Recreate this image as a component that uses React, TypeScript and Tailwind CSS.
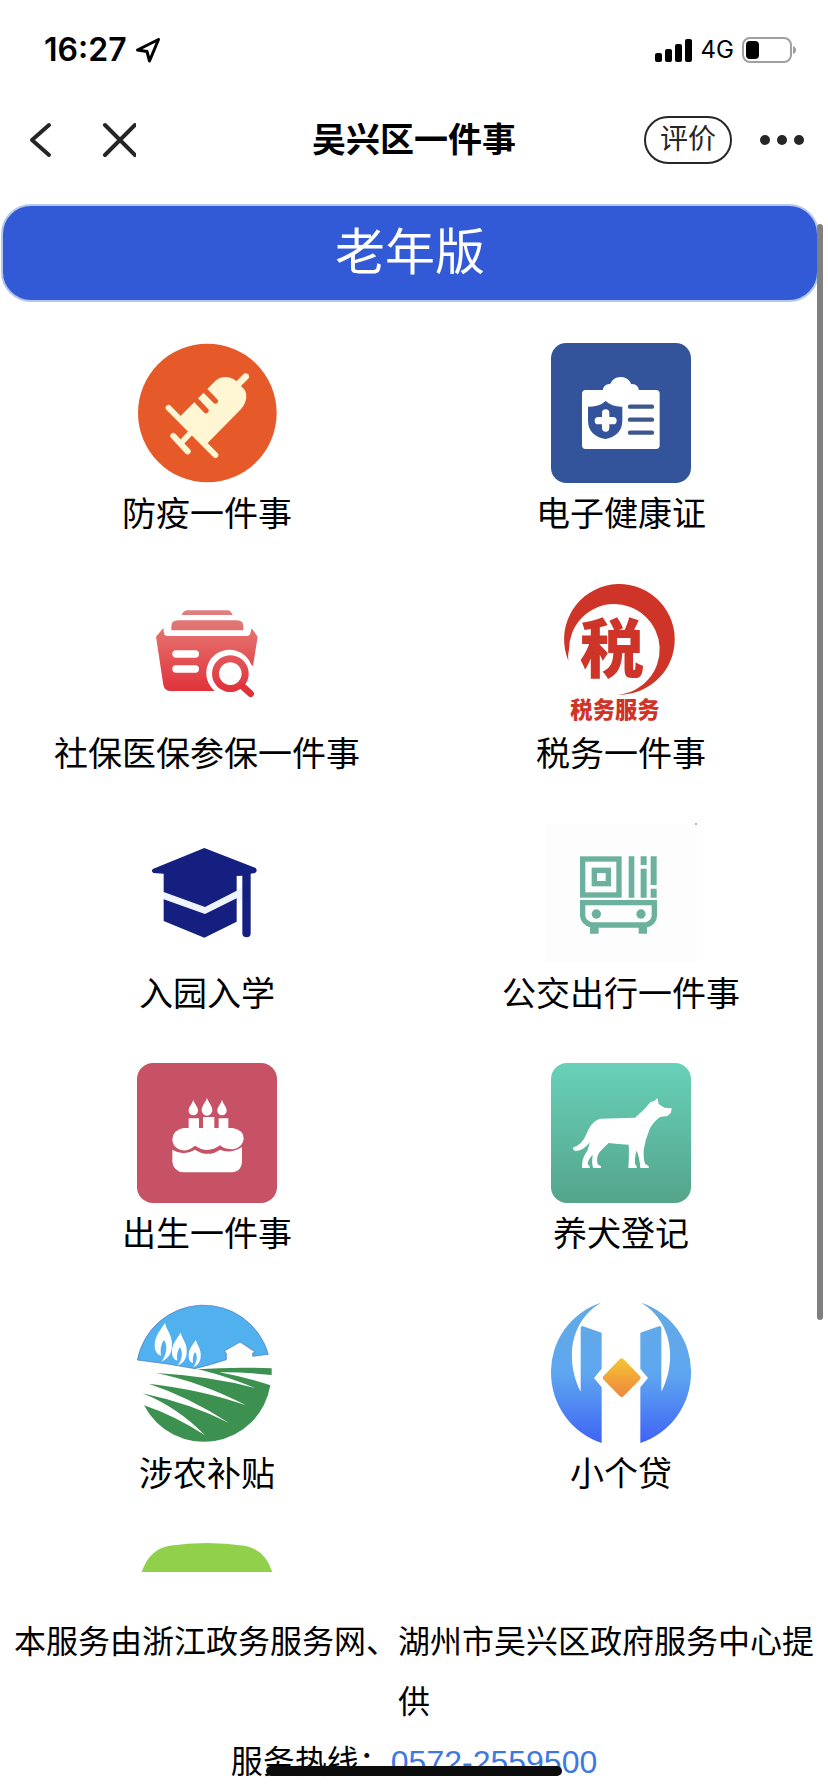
import type { ReactNode } from "react";

type Service = {
  label: string;
  icon: ReactNode;
};

function VaccineIcon() {
  return (
    <svg viewBox="81 69 420 420" className="size-full" aria-hidden="true">
      <circle cx="292" cy="279" r="208" fill="#e65a2a" />
      <g stroke="#fff6d3" strokeLinecap="round" fill="none">
        <path d="M176 264 316 405" strokeWidth="18" />
        <path d="m190 348 43 46" strokeWidth="18" />
        <path d="m212 370 30-32" strokeWidth="17" />
        <path d="m385 192 22-22" strokeWidth="20" />
      </g>
      <path
        d="M208 292 312 187Q325 171 348 171Q362 171 378 182L398 203Q410 213 409 232Q407 252 394 266L288 374Z"
        fill="#fff6d3"
      />
      <path
        d="m256 238 32 34m-6-64 34 35"
        stroke="#e65a2a"
        strokeWidth="16"
        strokeLinecap="round"
      />
    </svg>
  );
}

function HealthCardIcon() {
  return (
    <svg viewBox="93 69 420 420" className="size-full" aria-hidden="true">
      <rect x="93" y="69" width="420" height="420" rx="46" fill="#33539b" />
      <g fill="#fff">
        <rect x="186" y="210" width="233" height="177" rx="11" />
        <circle cx="302" cy="205" r="34" />
        <circle cx="268" cy="212" r="20" />
        <circle cx="337" cy="212" r="20" />
      </g>
      <path
        d="M204 260Q236 262 257 243Q276 261 307 260V302C307 335 285 351 256 357C226 351 204 335 204 302Z"
        fill="#33539b"
      />
      <path
        d="M257 279v45m-22-22h44"
        stroke="#fff"
        strokeWidth="22"
        strokeLinecap="round"
      />
      <path
        d="M330 260h66m-66 39h66m-66 39h66"
        stroke="#3e578e"
        strokeWidth="13"
        strokeLinecap="round"
      />
    </svg>
  );
}

function InsuranceIcon() {
  return (
    <svg viewBox="81 39 420 420" className="size-full" aria-hidden="true">
      <defs>
        <linearGradient
          id="insurance"
          x1="0"
          y1="120"
          x2="0"
          y2="380"
          gradientUnits="userSpaceOnUse"
        >
          <stop offset="0" stopColor="#df8081" />
          <stop offset="0.3" stopColor="#e56b69" />
          <stop offset="1" stopColor="#e02c36" />
        </linearGradient>
      </defs>
      <g fill="url(#insurance)">
        <path d="M215 135Q220 121 232 121H352Q363 121 368 135Z" />
        <path d="M184 181V170Q184 151 204 151H381Q400 151 400 170V181Z" />
        <path d="M160 174 138 200 160 345Q164 363 182 363H314A70 70 0 1 1 424 284L429 288 443 200 425 175 421 190Q419 198 410 198H173Q163 198 162 190Z" />
        <path
          fillRule="evenodd"
          d="M361 256a55 55 0 1 0 .1 0ZM361 277a34 34 0 1 1-.1 0Z"
        />
      </g>
      <path
        d="m399 350 23 21"
        stroke="#e03039"
        strokeWidth="20"
        strokeLinecap="round"
      />
      <rect x="187" y="241" width="80" height="22" rx="11" fill="#fff" />
      <rect x="187" y="286" width="80" height="22" rx="11" fill="#fff" />
    </svg>
  );
}

function TaxIcon() {
  return (
    <svg
      viewBox="93 39 420 420"
      className="size-full overflow-visible font-['Noto_Sans_CJK_SC',sans-serif] font-black"
      fill="#cf3428"
      aria-hidden="true"
    >
      <path d="M145 272A166 166 0 1 1 292 374A136 136 0 1 0 147 240Q142 256 145 272Z" />
      <text x="180" y="307" fontSize="192">
        税
      </text>
      <text x="151" y="445" fontSize="67">
        税务服务
      </text>
    </svg>
  );
}

function SchoolIcon() {
  return (
    <svg viewBox="81 39 420 420" className="size-full" aria-hidden="true">
      <path d="M161 240 285 290 397 230V270L285 320 161 275Z" fill="#eef5ff" />
      <g fill="#141f7f">
        <path d="M283 114 437 174Q444 183 435 189L422 191V370Q422 382 410 382Q397 382 397 370V197L380 198V242L285 291 161 246V191L130 189Q121 182 130 176Z" />
        <path d="M161 268 285 312 380 265V335L283 383 161 333Z" />
      </g>
    </svg>
  );
}

function BusIcon() {
  return (
    <svg
      viewBox="93 39 420 420"
      className="size-full overflow-visible"
      aria-hidden="true"
    >
      <rect x="75" y="42" width="456" height="417" fill="#fdfdfd" />
      <circle cx="528" cy="42" r="3" fill="#9aa5a3" />
      <g fill="none" stroke="#6bb19d" strokeWidth="16">
        <rect x="188" y="147" width="109" height="108" />
        <rect x="223" y="181" width="42" height="40" />
        <path d="M188 278H403V318Q402 338 378 345H214Q190 338 188 318Z" />
      </g>
      <g fill="#6bb19d">
        <path d="M326 139h17v124h-17zM362 139h18v26h-18zM362 176h18v87h-18zM392 139h18v86h-18zM392 236h18v27h-18z" />
        <path d="M210 348h26v23h-26zM356 348h25v23h-25z" />
        <circle cx="229" cy="312" r="14" />
        <circle cx="363" cy="312" r="14" />
      </g>
    </svg>
  );
}

function BirthIcon() {
  return (
    <svg viewBox="81 39 420 420" className="size-full" aria-hidden="true">
      <rect x="81" y="39" width="420" height="420" rx="48" fill="#c75265" />
      <g fill="#fff">
        <path d="M250 150C246 163 236 170 236 182A14 14 0 0 0 264 182C264 170 254 163 250 150Z" />
        <path d="M291 144C286 159 275 167 275 181A16 16 0 0 0 307 181C307 167 296 159 291 144Z" />
        <path d="M336 150C332 163 322 170 322 182A14 14 0 0 0 350 182C350 170 340 163 336 150Z" />
        <path d="M236 205h31v34h-31zM279 201h34v38h-34zM326 205h29v34h-29z" />
        <path d="M220 234H368Q401 240 401 266Q399 290 372 297Q347 300 330 286Q293 313 255 287Q229 309 205 297Q187 288 187 268Q189 240 220 234Z" />
        <path d="M187 299Q221 320 255 299Q294 324 330 299Q361 313 396 291V335Q394 367 360 367H222Q190 365 187 335Z" />
      </g>
    </svg>
  );
}

function DogIcon() {
  return (
    <svg viewBox="93 39 420 420" className="size-full" aria-hidden="true">
      <defs>
        <linearGradient id="dog" x1="0" y1="0" x2="0" y2="1">
          <stop offset="0" stopColor="#68d1b9" />
          <stop offset="1" stopColor="#54a48b" />
        </linearGradient>
      </defs>
      <rect x="93" y="39" width="420" height="420" rx="48" fill="url(#dog)" />
      <path
        d="M412 144 416 162 433 173 455 175 453 188 442 198 420 201Q396 219 388 240Q375 270 371 300Q370 328 375 341L386 348V354H361Q359 322 350 302Q344 318 345 342L350 348V354H325Q328 310 326 284Q295 282 266 279Q251 293 237 308Q228 325 233 343L243 349V354H219Q214 335 218 314Q204 328 203 343L209 348V354H186Q184 325 202 302L210 276Q190 303 166 303Q157 300 160 292Q186 284 198 255Q213 213 240 206L345 203Q370 183 392 156L403 153Z"
        fill="#fff"
      />
    </svg>
  );
}

function FarmIcon() {
  const leaf =
    "M165 98C152 120 134 138 134 166C134 185 143 195 153 197C150 180 153 162 162 150C174 166 170 195 154 215C176 206 187 190 186 160C185 132 169 120 165 98Z";

  return (
    <svg viewBox="81 39 420 420" className="size-full" aria-hidden="true">
      <path
        d="M82 210A202 202 0 0 1 475 193L428 199V189L436 186 390 156 343 183 349 190V209Q300 225 255 236Q170 220 82 210Z"
        fill="#51b1ef"
        stroke="#4a72b8"
        strokeWidth="2"
      />
      <g fill="#fff">
        <path d={leaf} />
        <path d={leaf} transform="translate(72 44) scale(.85)" />
        <path d={leaf} transform="translate(142 81) scale(.7)" />
      </g>
      <path
        d="M262 238Q370 230 485 235V255Q400 246 328 247Q410 262 481 286A202 202 0 0 1 102 346Q190 375 285 436Q200 350 97 310Q240 340 357 399Q240 322 116 281Q280 300 408 346Q270 275 138 249Q300 258 435 294Q330 252 262 238Z"
        fill="#3d9150"
      />
    </svg>
  );
}

function LoanIcon() {
  const wing =
    "M243 38A218 218 0 0 0 93 249A222 222 0 0 0 245 459V292L222 264 245 236V128L187 108 182 112V305C140 225 140 100 243 38Z";

  return (
    <svg viewBox="93 39 420 420" className="size-full" aria-hidden="true">
      <defs>
        <linearGradient
          id="wing"
          x1="0"
          y1="39"
          x2="0"
          y2="459"
          gradientUnits="userSpaceOnUse"
        >
          <stop offset="0.1" stopColor="#62a9e6" />
          <stop offset="0.5" stopColor="#5ea7f0" />
          <stop offset="1" stopColor="#4063f5" />
        </linearGradient>
        <linearGradient id="coin" x1="0" y1="0" x2="0" y2="1">
          <stop offset="0" stopColor="#f3c534" />
          <stop offset="1" stopColor="#f0853d" />
        </linearGradient>
      </defs>
      <g fill="url(#wing)">
        <path d={wing} />
        <path d={wing} transform="translate(606) scale(-1 1)" />
      </g>
      <path
        d="M299 208Q305 202 311 208L359 257Q365 263 359 269L311 318Q305 324 299 318L251 269Q245 263 251 257Z"
        fill="url(#coin)"
      />
    </svg>
  );
}

function GreenIcon() {
  return (
    <svg viewBox="81 759 420 420" className="size-full" aria-hidden="true">
      <path
        d="M94 850Q115 779 178 767Q290 751 404 767Q467 779 488 850Q505 969 488 1088Q467 1159 404 1171Q290 1187 178 1171Q115 1159 94 1088Q77 969 94 850Z"
        fill="#90d04b"
      />
    </svg>
  );
}

const SERVICES: Service[] = [
  { label: "防疫一件事", icon: <VaccineIcon /> },
  { label: "电子健康证", icon: <HealthCardIcon /> },
  { label: "社保医保参保一件事", icon: <InsuranceIcon /> },
  { label: "税务一件事", icon: <TaxIcon /> },
  { label: "入园入学", icon: <SchoolIcon /> },
  { label: "公交出行一件事", icon: <BusIcon /> },
  { label: "出生一件事", icon: <BirthIcon /> },
  { label: "养犬登记", icon: <DogIcon /> },
  { label: "涉农补贴", icon: <FarmIcon /> },
  { label: "小个贷", icon: <LoanIcon /> },
  { label: "", icon: <GreenIcon /> },
];

function StatusBar() {
  return (
    <div className="flex h-[100px] shrink-0 items-center justify-between pr-8 pl-11">
      <div className="flex items-center gap-2">
        <span className="font-['Inter',sans-serif] text-[32px] leading-10 font-semibold">
          16:27
        </span>
        <svg viewBox="0 0 26 26" className="size-[26px]" aria-hidden="true">
          <path
            d="M23.500 2.500 2.500 13l9.500 1.500L14.500 24Z"
            fill="none"
            stroke="#000"
            strokeWidth="3"
            strokeLinejoin="round"
          />
        </svg>
      </div>
      <div className="flex items-center gap-2">
        <svg viewBox="0 0 38 24" className="h-6 w-[38px]" aria-hidden="true">
          <rect x="0" y="15" width="7" height="9" rx="2" />
          <rect x="10" y="11" width="7" height="13" rx="2" />
          <rect x="20" y="6" width="7" height="18" rx="2" />
          <rect x="30" y="1" width="7" height="23" rx="2" />
        </svg>
        <span className="font-['Inter',sans-serif] text-2xl">4G</span>
        <svg viewBox="0 0 54 26" className="h-[26px] w-[54px]" aria-hidden="true">
          <rect
            x="1"
            y="1"
            width="48"
            height="24"
            rx="7"
            fill="none"
            stroke="#a0a0a0"
            strokeWidth="2"
          />
          <rect x="4" y="4" width="13" height="18" rx="4" />
          <path d="M51 9Q54 10 54 13Q54 16 51 17Z" fill="#a0a0a0" />
        </svg>
      </div>
    </div>
  );
}

function NavBar() {
  return (
    <header className="grid h-20 shrink-0 grid-cols-[1fr_auto_1fr] items-center px-6 text-[#262626]">
      <div className="flex items-center gap-10">
        <button type="button" aria-label="返回">
          <svg viewBox="0 0 36 36" className="size-9" aria-hidden="true">
            <path
              d="M25 3 8 18l17 15"
              fill="none"
              stroke="currentColor"
              strokeWidth="4"
              strokeLinecap="round"
              strokeLinejoin="round"
            />
          </svg>
        </button>
        <button type="button" aria-label="关闭">
          <svg viewBox="0 0 36 36" className="size-9" aria-hidden="true">
            <path
              d="m5 3 30 30m0-30L5 33"
              stroke="currentColor"
              strokeWidth="4"
              strokeLinecap="round"
            />
          </svg>
        </button>
      </div>
      <h1 className="text-[34px] leading-10 font-bold text-black">
        吴兴区一件事
      </h1>
      <div className="flex items-center justify-end gap-7">
        <button
          type="button"
          className="h-12 rounded-full border-2 border-[#262626] px-[14px] text-[28px] leading-none"
        >
          评价
        </button>
        <button type="button" aria-label="更多">
          <svg viewBox="0 0 44 12" className="h-3 w-11" fill="currentColor" aria-hidden="true">
            <circle cx="5" cy="6" r="5" />
            <circle cx="22" cy="6" r="5" />
            <circle cx="39" cy="6" r="5" />
          </svg>
        </button>
      </div>
    </header>
  );
}

function ServiceTile({ label, icon }: Service) {
  return (
    <a
      href="#"
      aria-label={label || "更多服务"}
      className="flex flex-col items-center pb-[38px]"
    >
      <span className="size-[140px]">{icon}</span>
      <span className="text-[34px] leading-[62px]">{label}</span>
    </a>
  );
}

export default function App() {
  return (
    <div className="relative flex h-screen flex-col overflow-hidden bg-white font-['Liberation_Sans','Noto_Sans_CJK_SC',sans-serif] text-black">
      <StatusBar />
      <NavBar />
      <div className="relative min-h-0 flex-1">
        <main className="h-full overflow-y-auto pt-6 [scrollbar-width:none]">
          <button
            type="button"
            className="ml-px flex h-[98px] w-[calc(100%-10px)] items-center justify-center rounded-[30px] border-2 border-[#b5c8ea] bg-[#325ad6] text-[50px] text-white"
          >
            老年版
          </button>
          <nav className="grid grid-cols-2 pt-[41px]">
            {SERVICES.map((service) => (
              <ServiceTile key={service.label} {...service} />
            ))}
          </nav>
        </main>
        <div className="absolute top-11 right-[5px] bottom-[252px] w-1.5 rounded-full bg-[#7f7f7f]" />
      </div>
      <footer className="shrink-0 px-3 pt-10 text-center text-[32px] leading-[60px]">
        <p>本服务由浙江政务服务网、湖州市吴兴区政府服务中心提供</p>
        <p>
          服务热线：
          <a href="tel:0572-2559500" className="text-[#3f78df]">
            0572-2559500
          </a>
        </p>
      </footer>
      <div className="absolute bottom-4 left-1/2 h-2.5 w-[296px] -translate-x-1/2 rounded-full bg-[#0c0c0c]" />
    </div>
  );
}
